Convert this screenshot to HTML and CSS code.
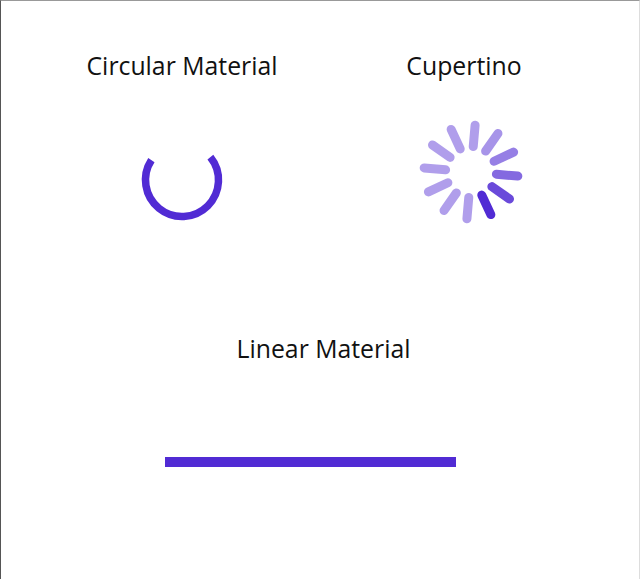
FILE: index.html
```html
<!DOCTYPE html>
<html>
<head>
<meta charset="utf-8">
<link rel="stylesheet" href="styles.css">
</head>
<body>
<main class="page">
  <section class="row">
    <div class="cell cell-left">
      <div class="label">Circular Material</div>
      <svg class="ring" width="90" height="90" viewBox="-45 -45 90 90">
        <path d="M28.37 -22.97 A36.5 36.5 0 1 1 -30.61 -19.88" fill="none" stroke="#512BD4" stroke-width="7.5"/>
      </svg>
    </div>
    <div class="cell cell-right">
      <div class="label">Cupertino</div>
      <svg class="spin" width="110" height="110" viewBox="-55 -55 110 110">
        <g stroke="#512BD4" stroke-width="9" stroke-linecap="round">
          <line x1="0" y1="-25.5" x2="0" y2="-47" transform="rotate(5)" opacity="0.45"/>
          <line x1="0" y1="-25.5" x2="0" y2="-47" transform="rotate(35)" opacity="0.5"/>
          <line x1="0" y1="-25.5" x2="0" y2="-47" transform="rotate(65)" opacity="0.6"/>
          <line x1="0" y1="-25.5" x2="0" y2="-47" transform="rotate(95)" opacity="0.7"/>
          <line x1="0" y1="-25.5" x2="0" y2="-47" transform="rotate(125)" opacity="0.85"/>
          <line x1="0" y1="-25.5" x2="0" y2="-47" transform="rotate(155)" opacity="1"/>
          <line x1="0" y1="-25.5" x2="0" y2="-47" transform="rotate(185)" opacity="0.45"/>
          <line x1="0" y1="-25.5" x2="0" y2="-47" transform="rotate(215)" opacity="0.45"/>
          <line x1="0" y1="-25.5" x2="0" y2="-47" transform="rotate(245)" opacity="0.45"/>
          <line x1="0" y1="-25.5" x2="0" y2="-47" transform="rotate(275)" opacity="0.45"/>
          <line x1="0" y1="-25.5" x2="0" y2="-47" transform="rotate(305)" opacity="0.45"/>
          <line x1="0" y1="-25.5" x2="0" y2="-47" transform="rotate(335)" opacity="0.45"/>
        </g>
      </svg>
    </div>
  </section>
  <section class="linear">
    <div class="label">Linear Material</div>
    <div class="bar"></div>
  </section>
</main>
</body>
</html>
```

FILE: styles.css
```css
html, body {
  margin: 0;
  padding: 0;
  background: #fff;
}
body {
  width: 640px;
  height: 579px;
  box-sizing: border-box;
  border-left: 1px solid #555;
  border-top: 1px solid #999;
  border-right: 1px solid #ddd;
  font-family: "Open Sans", "Noto Sans", sans-serif;
  color: #111;
  overflow: hidden;
}
.page {
  display: flex;
  flex-direction: column;
}
.row {
  display: grid;
  grid-template-columns: 284px 280px;
  margin-left: 39px;
  padding-top: 47px;
}
.cell {
  display: flex;
  flex-direction: column;
  align-items: center;
}
.label {
  font-size: 24.8px;
  line-height: 34px;
  white-space: nowrap;
}
.ring {
  margin-top: 53px;
}
.spin {
  margin-top: 35px;
  margin-left: 14px;
}
.linear {
  display: flex;
  flex-direction: column;
  align-items: center;
  margin-top: 104px;
}
.linear .label {
  margin-left: 7px;
}
.bar {
  width: 291px;
  height: 10px;
  background: #512BD4;
  margin-top: 92px;
  margin-right: 20px;
}
```
